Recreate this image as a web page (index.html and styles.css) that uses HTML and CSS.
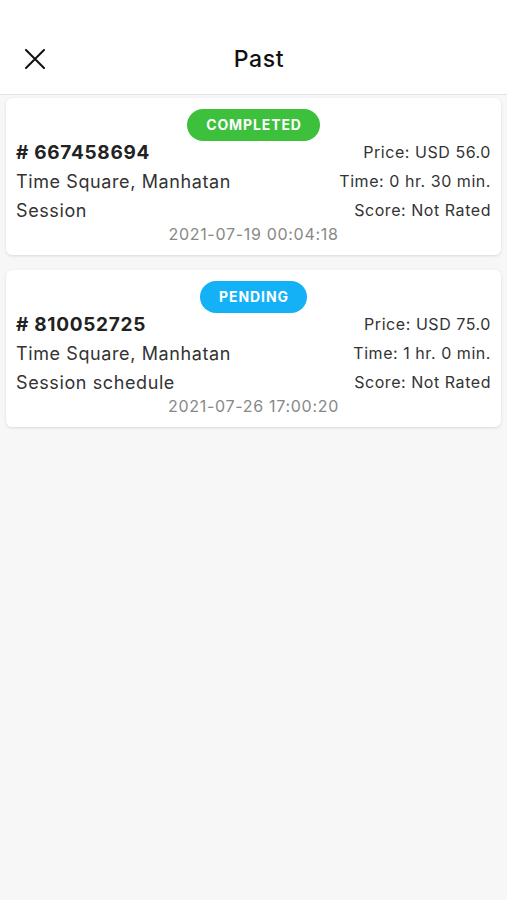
FILE: index.html
```html
<!DOCTYPE html>
<html lang="en">
  <head>
    <meta charset="UTF-8" />
    <meta name="viewport" content="width=device-width, initial-scale=1.0" />
    <title>Past</title>
    <link rel="stylesheet" href="styles.css">
  </head>
  <body>
    <header class="topbar">
      <button class="close" aria-label="Close">
        <svg width="20" height="20" viewBox="0 0 20 20">
          <path d="M1 1 L19 19 M19 1 L1 19" stroke="#111" stroke-width="2" stroke-linecap="round" />
        </svg>
      </button>
      <h1>Past</h1>
    </header>
    <main class="list">
      <div class="card">
        <div class="badge-row"><span class="badge completed">Completed</span></div>
        <div class="rows">
          <span class="order"># 667458694</span>
          <span class="meta">Price: USD 56.0</span>
          <span class="info">Time Square, Manhatan</span>
          <span class="meta">Time: 0 hr. 30 min.</span>
          <span class="info">Session</span>
          <span class="meta">Score: Not Rated</span>
        </div>
        <div class="date">2021-07-19 00:04:18</div>
      </div>
      <div class="card">
        <div class="badge-row"><span class="badge pending">Pending</span></div>
        <div class="rows">
          <span class="order"># 810052725</span>
          <span class="meta">Price: USD 75.0</span>
          <span class="info">Time Square, Manhatan</span>
          <span class="meta">Time: 1 hr. 0 min.</span>
          <span class="info">Session schedule</span>
          <span class="meta">Score: Not Rated</span>
        </div>
        <div class="date">2021-07-26 17:00:20</div>
      </div>
    </main>
  </body>
</html>
```

FILE: styles.css
```css
* {
  box-sizing: border-box;
}
html,
body {
  min-height: 100vh;
  margin: 0;
  padding: 0;
}
body {
  font-family: Inter, "Liberation Sans", Arial, sans-serif;
  color: #222;
  background: #f7f7f7;
}
.topbar {
  height: 95px;
  background: #fff;
  border-bottom: 1px solid #e3e3e3;
  display: flex;
  align-items: flex-end;
  justify-content: center;
  padding-bottom: 21px;
  padding-left: 11px;
  position: relative;
}
.topbar h1 {
  margin: 0;
  font-size: 23px;
  font-weight: 500;
  letter-spacing: 0.6px;
  color: #111;
  line-height: 28px;
}
.close {
  position: absolute;
  left: 25px;
  top: 49px;
  background: none;
  border: 0;
  padding: 0;
  width: 20px;
  height: 20px;
}
.list {
  padding: 3px 6px;
  display: flex;
  flex-direction: column;
  gap: 15px;
}
.card {
  background: #fff;
  border-radius: 6px;
  box-shadow: 0 1px 3px rgba(0, 0, 0, 0.12);
  padding: 11px 10px 12px 10px;
}
.badge-row {
  display: flex;
  justify-content: center;
  margin-bottom: -3px;
}
.badge {
  height: 32px;
  line-height: 32px;
  padding: 0 18px 0 19px;
  border-radius: 16px;
  color: #fff;
  font-weight: 700;
  font-size: 14px;
  letter-spacing: 0.9px;
  text-transform: uppercase;
}
.completed {
  background: #3dc13c;
}
.pending {
  background: #14b1f6;
}
.rows {
  display: grid;
  grid-template-columns: 1fr auto;
  line-height: 29px;
}
.order {
  font-size: 19px;
  font-weight: 700;
  letter-spacing: 0.7px;
  color: #222;
}
.info {
  font-size: 18px;
  letter-spacing: 0.6px;
  color: #333;
}
.meta {
  font-size: 16px;
  letter-spacing: 0.55px;
  color: #333;
  text-align: right;
}
.date {
  text-align: center;
  font-size: 16px;
  letter-spacing: 0.7px;
  color: #888;
  line-height: 18px;
}
```
